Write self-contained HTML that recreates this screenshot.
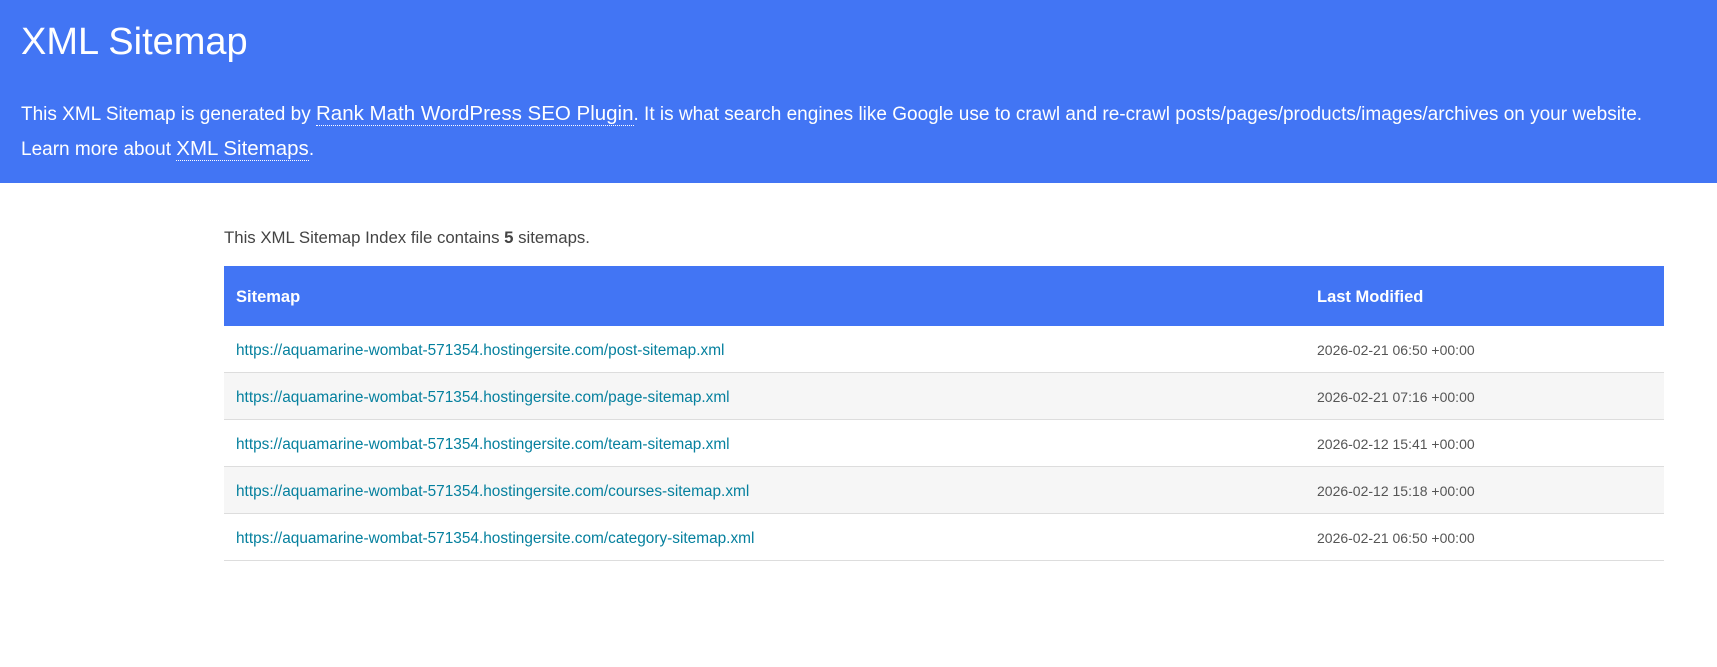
<!DOCTYPE html>
<html><head><meta charset="utf-8"><style>
body{margin:0;font-family:"Liberation Sans","DejaVu Sans",sans-serif;color:#444;background:#fff;width:1717px;height:667px;overflow:hidden}
#hd{background:#4275f4;height:183px;color:#fff;padding:0 21px;box-sizing:border-box}
#hd h1{margin:0;padding-top:20px;font-weight:normal;font-size:38px;line-height:45px}
#hd p{margin:32px 0 0;font-size:19px;line-height:34px}
#hd a{color:#fff;text-decoration:none;border-bottom:1px dotted #fff;font-size:20.5px}
#c{position:absolute;left:224px;top:183px;width:1440px}
#c .d{margin:44px 0 0;font-size:16.8px;line-height:22px}
table{border-collapse:collapse;width:100%;margin-top:17px;font-size:15.4px}
th{background:#4275f4;color:#fff;text-align:left;height:60px;padding:3px 12px 0;font-size:16.5px;box-sizing:border-box}
td{height:42px;padding:4px 12px 0;border-bottom:1px solid #ddd;line-height:20px;vertical-align:middle}
td:last-child{font-size:14px;color:#555;padding-bottom:2px;height:40px}
tr:nth-child(odd) td{background:#f6f6f6}
td a{color:#05809e;text-decoration:none}
td:last-child,th:last-child{width:335px}
</style></head><body>
<div id="hd"><h1>XML Sitemap</h1>
<p>This XML Sitemap is generated by <a>Rank Math WordPress SEO Plugin</a>. It is what search engines like Google use to crawl and re-crawl posts/pages/products/images/archives on your website.<br>Learn more about <a>XML Sitemaps</a>.</p></div>
<div id="c"><div class="d">This XML Sitemap Index file contains <b>5</b> sitemaps.</div>
<table><tr><th>Sitemap</th><th>Last Modified</th></tr>
<tr><td><a>https://aquamarine-wombat-571354.hostingersite.com/post-sitemap.xml</a></td><td>2026-02-21 06:50 +00:00</td></tr>
<tr><td><a>https://aquamarine-wombat-571354.hostingersite.com/page-sitemap.xml</a></td><td>2026-02-21 07:16 +00:00</td></tr>
<tr><td><a>https://aquamarine-wombat-571354.hostingersite.com/team-sitemap.xml</a></td><td>2026-02-12 15:41 +00:00</td></tr>
<tr><td><a>https://aquamarine-wombat-571354.hostingersite.com/courses-sitemap.xml</a></td><td>2026-02-12 15:18 +00:00</td></tr>
<tr><td><a>https://aquamarine-wombat-571354.hostingersite.com/category-sitemap.xml</a></td><td>2026-02-21 06:50 +00:00</td></tr>
</table></div>
</body></html>
